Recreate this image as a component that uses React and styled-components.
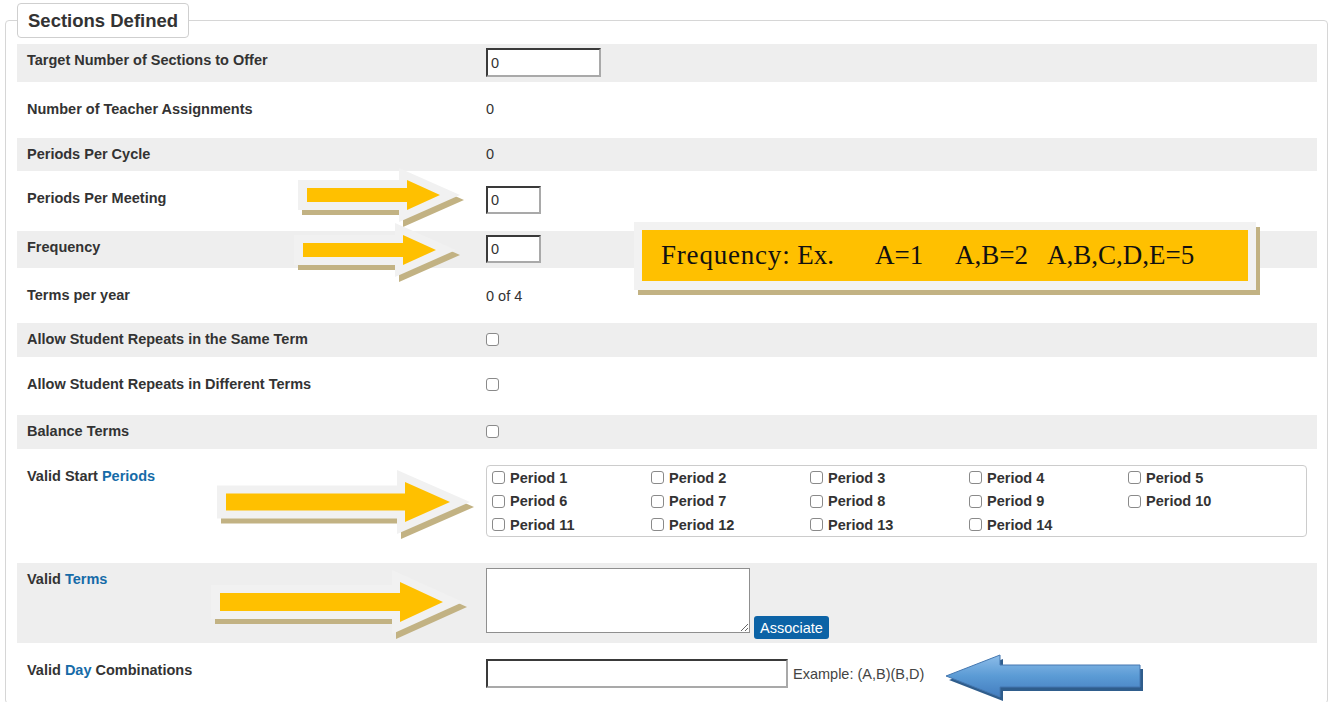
import styled, { createGlobalStyle } from 'styled-components'

const GlobalStyle = createGlobalStyle`
  html, body {
    margin: 0;
    padding: 0;
    background: #fff;
    overflow: hidden;
  }
  body {
    font-family: "Liberation Sans", Arial, sans-serif;
    color: #333;
  }
`

const PERIODS = Array.from({ length: 14 }, (_, i) => `Period ${i + 1}`)

// geometry of the yellow call-out pointers, in page coordinates
const YELLOW_POINTERS = [
  { x0: 307, x1: 407, tip: 440, cy: 195, sh: 7, hh: 15 },
  { x0: 303, x1: 403, tip: 436, cy: 250, sh: 7, hh: 15 },
  { x0: 226, x1: 405, tip: 450, cy: 502, sh: 8.5, hh: 20 },
  { x0: 220, x1: 400, tip: 443, cy: 602, sh: 9, hh: 20 },
]

function pointerPoints({ x0, x1, tip, cy, sh, hh }, dx = 0, dy = 0) {
  return [
    [x0, cy - sh],
    [x1, cy - sh],
    [x1, cy - hh],
    [tip, cy],
    [x1, cy + hh],
    [x1, cy + sh],
    [x0, cy + sh],
  ]
    .map(([x, y]) => `${x + dx},${y + dy}`)
    .join(' ')
}

function YellowArrow(props) {
  const { x0, x1, tip, cy, sh, hh } = props
  const halo = { x0: x0 - 9, x1: x1 - 8, tip: tip + 20, cy, sh: sh + 8, hh: hh + 12 }
  const left = halo.x0
  const top = cy - halo.hh
  const w = halo.tip - halo.x0 + 6
  const h = halo.hh * 2 + 7
  return (
    <Overlay $x={left} $y={top} width={w} height={h} viewBox={`${left} ${top} ${w} ${h}`}>
      <polygon points={pointerPoints(halo, 4, 5)} fill="#c2b283" />
      <polygon points={pointerPoints(halo)} fill="#f1f1f1" />
      <polygon points={pointerPoints(props)} fill="#ffc000" />
    </Overlay>
  )
}

function BlueArrow() {
  const pts = '946,676 1000,655 1000,665 1140,665 1140,687 1000,687 1000,697'
  return (
    <Overlay $x={940} $y={650} width={210} height={54} viewBox="940 650 210 54">
      <defs>
        <linearGradient id="blueFill" x1="0" y1="0" x2="0" y2="1">
          <stop offset="0" stopColor="#8dbde9" />
          <stop offset="0.5" stopColor="#5b9bd5" />
          <stop offset="1" stopColor="#437dbf" />
        </linearGradient>
      </defs>
      <polygon points={pts} fill="#2f5d8c" transform="translate(3 4)" />
      <polygon points={pts} fill="url(#blueFill)" stroke="#4477b0" strokeWidth="1" />
    </Overlay>
  )
}

export default function App() {
  return (
    <Page>
      <GlobalStyle />
      <Fieldset>
        <Legend>Sections Defined</Legend>

        <Row $shade $h={38}>
          <Label>Target Number of Sections to Offer</Label>
          <Value $shift={-4}>
            <TextBox $w={115} defaultValue="0" />
          </Value>
        </Row>
        <Row $h={56}>
          <Label>Number of Teacher Assignments</Label>
          <Value>0</Value>
        </Row>
        <Row $shade $h={33}>
          <Label>Periods Per Cycle</Label>
          <Value>0</Value>
        </Row>
        <Row $h={60}>
          <Label>Periods Per Meeting</Label>
          <Value $shift={-4}>
            <TextBox $w={55} $h={28} defaultValue="0" />
          </Value>
        </Row>
        <Row $shade $h={37}>
          <Label>Frequency</Label>
          <Value $shift={-4}>
            <TextBox $w={55} $h={28} defaultValue="0" />
          </Value>
        </Row>
        <Row $h={55}>
          <Label>Terms per year</Label>
          <Value $shift={1}>0 of 4</Value>
        </Row>
        <Row $shade $h={34}>
          <Label>Allow Student Repeats in the Same Term</Label>
          <Value>
            <Check />
          </Value>
        </Row>
        <Row $h={58}>
          <Label>Allow Student Repeats in Different Terms</Label>
          <Value>
            <Check />
          </Value>
        </Row>
        <Row $shade $h={34}>
          <Label>Balance Terms</Label>
          <Value>
            <Check />
          </Value>
        </Row>
        <Row $h={114}>
          <Label>
            Valid Start <Link>Periods</Link>
          </Label>
          <Value $shift={-3}>
            <PeriodBox>
              {PERIODS.map((p) => (
                <PeriodItem key={p}>
                  <Check />
                  {p}
                </PeriodItem>
              ))}
            </PeriodBox>
          </Value>
        </Row>
        <Row $shade $h={80}>
          <Label>
            Valid <Link>Terms</Link>
          </Label>
          <Value $shift={-3} $bottom>
            <TermsArea />
            <AssociateButton>Associate</AssociateButton>
          </Value>
        </Row>
        <Row $h={60}>
          <Label>
            Valid <Link>Day</Link> Combinations
          </Label>
          <Value $shift={-3}>
            <TextBox $w={302} />
            <Hint>Example: (A,B)(B,D)</Hint>
          </Value>
        </Row>
      </Fieldset>

      {YELLOW_POINTERS.map((a, i) => (
        <YellowArrow key={i} {...a} />
      ))}

      <Callout>
        <CalloutBody>
          <Stop $w={214}>
            <Wide>Frequency:</Wide> Ex.
          </Stop>
          <Stop $w={80}>A=1</Stop>
          <Stop $w={92}>A,B=2</Stop>
          <Stop>A,B,C,D,E=5</Stop>
        </CalloutBody>
      </Callout>

      <BlueArrow />
    </Page>
  )
}

const Page = styled.div`
  position: relative;
  box-sizing: border-box;
  height: 702px;
  padding: 3px 4px 0 5px;
`

const Fieldset = styled.fieldset`
  margin: 0;
  min-width: 0;
  border: 1px solid #d6d6d6;
  border-radius: 4px;
  padding: 6px 10px 0 11px;
`

const Legend = styled.legend`
  padding: 6px 10px;
  border: 1px solid #cfcfcf;
  border-radius: 4px;
  background: #fff;
  font-size: 18.5px;
  line-height: 21px;
  font-weight: bold;
  color: #333;
`

const Row = styled.div`
  display: grid;
  grid-template-columns: 459px 1fr;
  align-items: start;
  box-sizing: border-box;
  height: ${({ $h }) => $h}px;
  padding: ${({ $shade }) => ($shade ? 8 : 19)}px 10px 0;
  background: ${({ $shade }) => ($shade ? '#eeeeee' : 'transparent')};
`

const Label = styled.div`
  font-size: 14.5px;
  line-height: 16px;
  font-weight: bold;
  color: #333;
`

const Link = styled.span`
  color: #166ba8;
`

const Value = styled.div`
  display: flex;
  align-items: ${({ $bottom }) => ($bottom ? 'flex-end' : 'center')};
  min-height: 16px;
  margin-top: ${({ $shift }) => $shift || 0}px;
  font-size: 14.5px;
  line-height: 16px;
  color: #333;
`

const TextBox = styled.input.attrs({ type: 'text' })`
  box-sizing: border-box;
  width: ${({ $w }) => $w}px;
  height: ${({ $h }) => $h || 29}px;
  margin: 0;
  padding: 0 3px;
  border: 2px solid;
  border-color: #3a3a3a #a9a9a9 #a9a9a9 #3a3a3a;
  background: #fff;
  font-family: "Liberation Sans", Arial, sans-serif;
  font-size: 14.5px;
  color: #333;
  outline: none;
`

const Check = styled.input.attrs({ type: 'checkbox' })`
  appearance: none;
  box-sizing: border-box;
  width: 13px;
  height: 13px;
  margin: 0;
  flex: none;
  border: 1px solid #8a8a8a;
  border-radius: 3px;
  background: #fff;
`

const PeriodBox = styled.div`
  box-sizing: border-box;
  width: 821px;
  height: 72px;
  padding: 0 5px;
  border: 1px solid #cccccc;
  border-radius: 4px;
  display: grid;
  grid-template-columns: repeat(5, 159px);
  grid-auto-rows: 23.5px;
`

const PeriodItem = styled.label`
  display: flex;
  align-items: center;
  gap: 5px;
  font-size: 14.5px;
  font-weight: bold;
  color: #333;
  white-space: nowrap;
`

const TermsArea = styled.textarea`
  box-sizing: border-box;
  width: 264px;
  height: 65px;
  margin: 0;
  border: 1px solid #8f8f8f;
  background: #fff;
  font-family: "Liberation Sans", Arial, sans-serif;
`

const AssociateButton = styled.button`
  box-sizing: border-box;
  width: 75px;
  height: 23px;
  margin: 0 0 -6px 4px;
  padding: 0;
  border: none;
  border-radius: 3px;
  background: #0c63a6;
  color: #fff;
  font-family: "Liberation Sans", Arial, sans-serif;
  font-size: 14.5px;
`

const Hint = styled.span`
  margin-left: 5px;
  font-size: 14.5px;
  color: #444;
`

const Overlay = styled.svg`
  position: absolute;
  left: ${({ $x }) => $x}px;
  top: ${({ $y }) => $y}px;
  overflow: visible;
  pointer-events: none;
`

const Callout = styled.div`
  position: absolute;
  left: 634px;
  top: 222px;
  width: 622px;
  height: 68px;
  box-sizing: border-box;
  padding: 8px 8px 9px;
  background: #f2f2f2;
  box-shadow: 4px 5px 0 #c2b283;
`

const CalloutBody = styled.div`
  display: flex;
  align-items: center;
  height: 100%;
  padding-left: 19px;
  background: #ffc000;
  font-family: "Liberation Serif", "Times New Roman", serif;
  font-size: 27px;
  color: #111;
  white-space: pre;
`

const Stop = styled.span`
  flex: none;
  width: ${({ $w }) => ($w ? `${$w}px` : 'auto')};
`

const Wide = styled.span`
  letter-spacing: 0.8px;
`
